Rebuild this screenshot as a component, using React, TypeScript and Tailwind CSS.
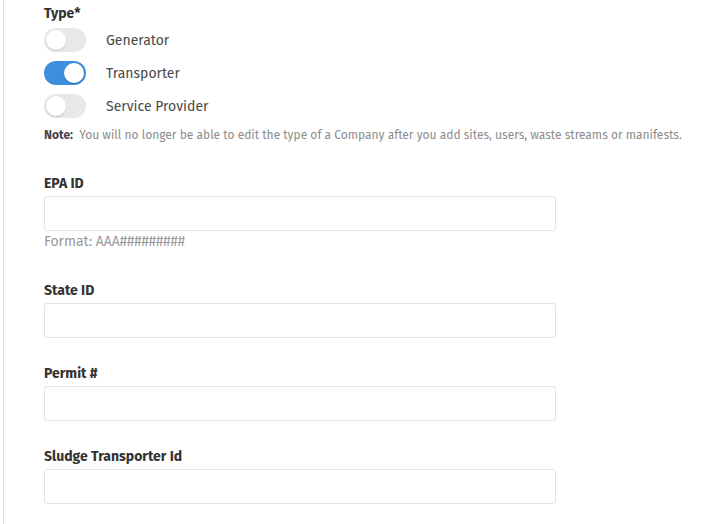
import { useState } from "react"

const font = { fontFamily: "'Fira Sans', Roboto, 'Noto Sans', sans-serif" }

function Toggle({ on, onClick }: { on: boolean; onClick: () => void }) {
  return (
    <button
      type="button"
      onClick={onClick}
      className={`relative h-6 w-[42px] shrink-0 rounded-full ${on ? "bg-[#3b8fdd]" : "bg-[#e8e8e8]"}`}
    >
      <span
        className={`absolute top-[2px] h-5 w-5 rounded-full bg-white shadow-[0_1px_2px_rgba(0,0,0,0.15)] ${on ? "left-[20px]" : "left-[2px]"}`}
      />
    </button>
  )
}

function Field({ label, hint, className = "" }: { label: string; hint?: string; className?: string }) {
  return (
    <div className={className}>
      <label className="block h-[18px] text-[14px] font-bold leading-[20px] text-[#333]">{label}</label>
      <input className="mt-1 block h-[35px] w-[512px] rounded-[3px] border border-[#e3e3e3] bg-white px-3 text-sm outline-none" />
      {hint && <p className="mt-[2px] text-[14px] leading-[18px] text-[#999]">{hint}</p>}
    </div>
  )
}

export default function App() {
  const [types, setTypes] = useState({ Generator: false, Transporter: true, "Service Provider": false })

  return (
    <div className="min-h-screen bg-white" style={font}>
      <div className="ml-[3px] min-h-screen border-l border-[#dcdcdc] pl-[40px] pt-[5px]">
        <div className="h-[18px] text-[14px] font-bold leading-[18px] text-[#333]">Type*</div>

        <div className="mt-[5px] flex flex-col gap-[9px]">
          {(Object.keys(types) as (keyof typeof types)[]).map((name) => (
            <div key={name} className="flex h-6 items-center gap-5">
              <Toggle on={types[name]} onClick={() => setTypes({ ...types, [name]: !types[name] })} />
              <span className="text-[14px] text-[#4a4a4a]">{name}</span>
            </div>
          ))}
        </div>

        <p className="mt-[9px] text-[12px] leading-4 text-[#8c8c8c]">
          <span className="font-bold text-[#444]">Note:</span>&nbsp; You will no longer be able to edit the type of a
          Company after you add sites, users, waste streams or manifests.
        </p>

        <Field label="EPA ID" hint="Format: AAA#########" className="mt-[31px]" />
        <Field label="State ID" className="mt-[30px]" />
        <Field label="Permit #" className="mt-[26px]" />
        <Field label="Sludge Transporter Id" className="mt-[26px]" />
      </div>
    </div>
  )
}
